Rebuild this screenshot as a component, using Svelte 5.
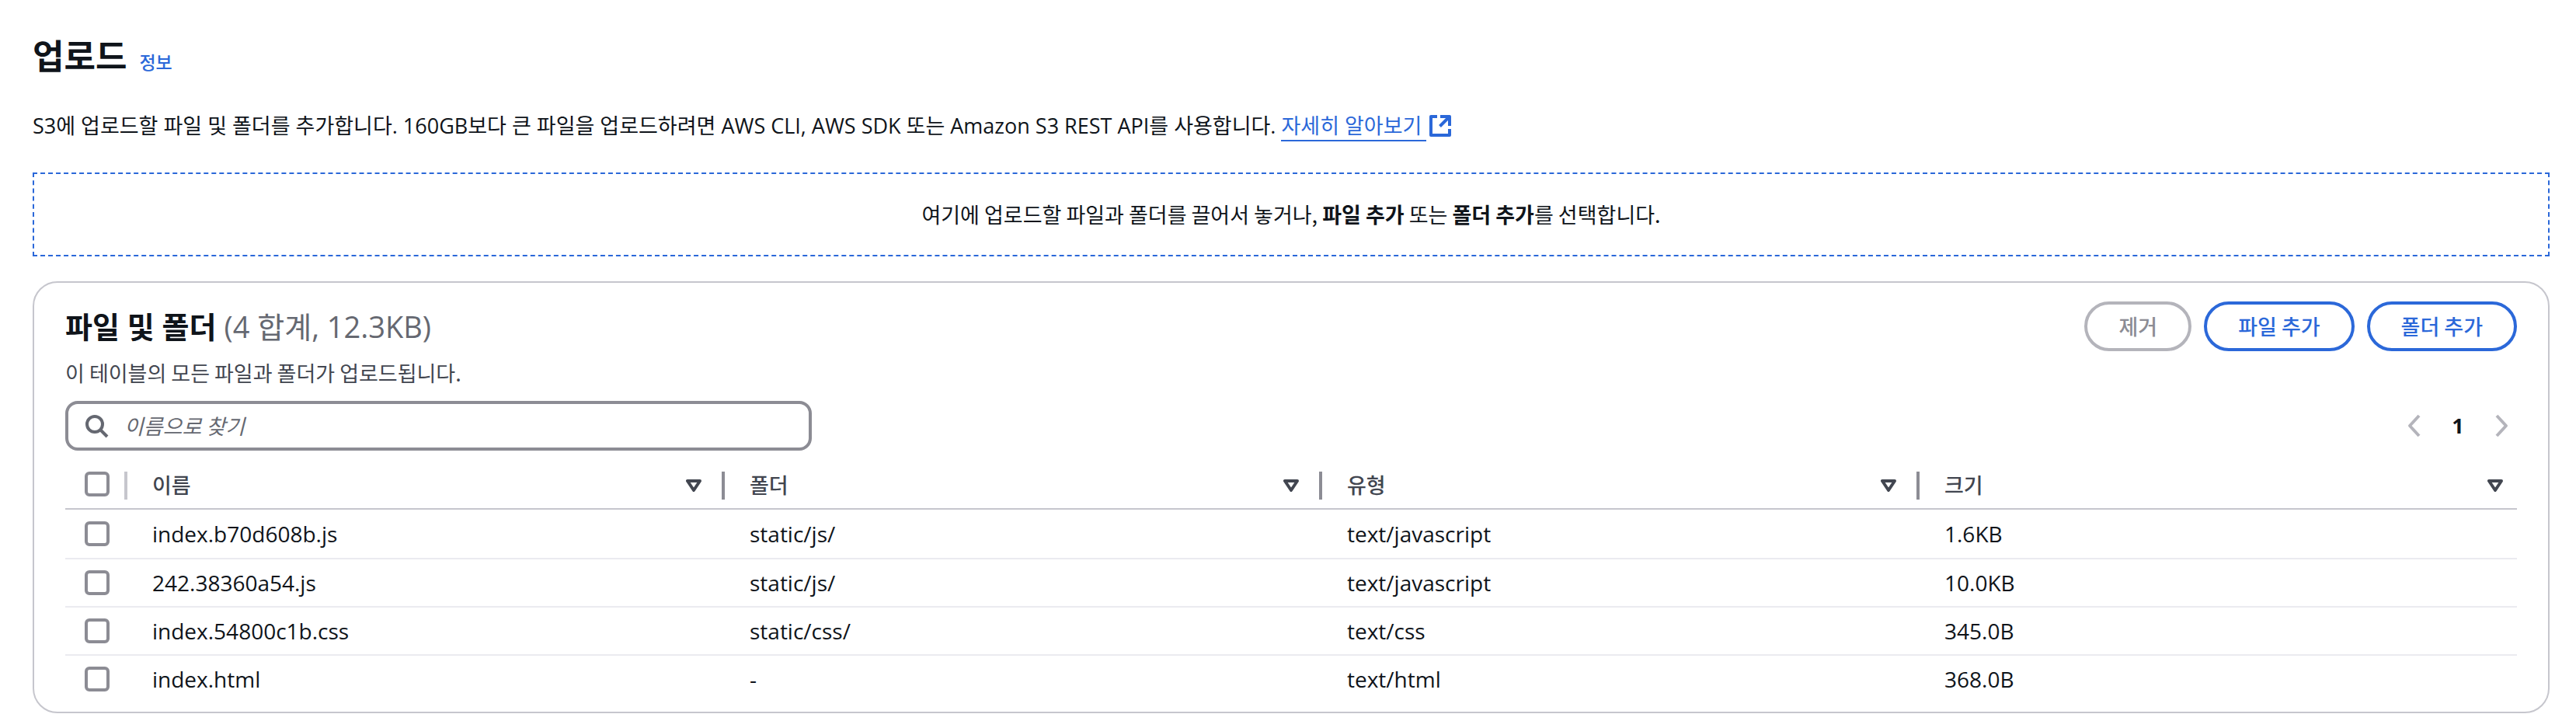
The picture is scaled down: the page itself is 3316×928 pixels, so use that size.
<script>
  const columns = [
    { key: 'name', label: '이름' },
    { key: 'folder', label: '폴더' },
    { key: 'type', label: '유형' },
    { key: 'size', label: '크기' }
  ];

  let files = $state([
    { name: 'index.b70d608b.js', folder: 'static/js/', type: 'text/javascript', size: '1.6KB', selected: false },
    { name: '242.38360a54.js', folder: 'static/js/', type: 'text/javascript', size: '10.0KB', selected: false },
    { name: 'index.54800c1b.css', folder: 'static/css/', type: 'text/css', size: '345.0B', selected: false },
    { name: 'index.html', folder: '-', type: 'text/html', size: '368.0B', selected: false }
  ]);

  let allSelected = $derived(files.every((file) => file.selected));

  function toggleAll(event) {
    for (const file of files) file.selected = event.currentTarget.checked;
  }
</script>

<main class="page">
  <header class="title-row">
    <h1>업로드</h1>
    <a class="info" href="#info">정보</a>
  </header>

  <p class="description">
    S3에 업로드할 파일 및 폴더를 추가합니다. 160GB보다 큰 파일을 업로드하려면 AWS CLI, AWS SDK 또는 Amazon S3 REST API를 사용합니다.
    <a class="learn-more" href="#learn-more"><span>자세히 알아보기</span><svg class="external" viewBox="0 0 28 28" aria-hidden="true"><path d="M10 2H2v24h24v-8M14 2h12v12M26 2 13.500 14.500" /></svg></a>
  </p>

  <section class="dropzone">
    <p>여기에 업로드할 파일과 폴더를 끌어서 놓거나, <b>파일 추가</b> 또는 <b>폴더 추가</b>를 선택합니다.</p>
  </section>

  <section class="card">
    <div class="card-header">
      <div class="card-title">
        <h2>파일 및 폴더 <span class="counter">(4 합계, 12.3KB)</span></h2>
        <p class="subtitle">이 테이블의 모든 파일과 폴더가 업로드됩니다.</p>
      </div>
      <div class="actions">
        <button class="button" disabled>제거</button>
        <button class="button">파일 추가</button>
        <button class="button">폴더 추가</button>
      </div>
    </div>

    <div class="tools">
      <label class="search">
        <svg class="search-icon" viewBox="0 0 32 32" aria-hidden="true"><circle cx="14" cy="14" r="10" /><path d="M21 21l9 9" /></svg>
        <input type="text" placeholder="이름으로 찾기" aria-label="이름으로 찾기" />
      </label>
      <nav class="pagination">
        <button class="page-arrow" disabled aria-label="이전 페이지"><svg viewBox="0 0 32 32" aria-hidden="true"><path d="M22 3 10 16l12 13" /></svg></button>
        <button class="page-number" aria-current="page">1</button>
        <button class="page-arrow" disabled aria-label="다음 페이지"><svg viewBox="0 0 32 32" aria-hidden="true"><path d="M10 3l12 13-12 13" /></svg></button>
      </nav>
    </div>

    <table>
      <thead>
        <tr>
          <th class="select" scope="col">
            <div class="select-head">
              <input type="checkbox" checked={allSelected} onchange={toggleAll} aria-label="모두 선택" />
            </div>
          </th>
          {#each columns as column (column.key)}
            <th scope="col">
              <button class="sort">
                <span>{column.label}</span>
                <svg viewBox="0 0 20 16" aria-hidden="true"><path d="M2 2h16l-8 12z" /></svg>
              </button>
            </th>
          {/each}
        </tr>
      </thead>
      <tbody>
        {#each files as file (file.name)}
          <tr>
            <td class="select"><input type="checkbox" bind:checked={file.selected} aria-label={file.name} /></td>
            <td>{file.name}</td>
            <td>{file.folder}</td>
            <td>{file.type}</td>
            <td>{file.size}</td>
          </tr>
        {/each}
      </tbody>
    </table>
  </section>
</main>

<style>
  :global(body) {
    background: #fff;
  }

  .page {
    --ink: #0f141a;
    --muted: #424650;
    --hint: #656871;
    --line: #c6c6cd;
    --control: #8c8c94;
    --blue: #2b68d9;
    padding: 40px 34px 10px 42px;
    color: var(--ink);
    font: 400 27px/40px "Open Sans", "Noto Sans CJK KR", sans-serif;
  }

  h1,
  h2,
  p {
    margin: 0;
  }

  button,
  input {
    font: inherit;
  }

  .title-row {
    display: flex;
    align-items: baseline;
    gap: 16px;
  }

  h1 {
    font-size: 44px;
    line-height: 64px;
    font-weight: 700;
  }

  .info {
    color: var(--blue);
    font-size: 23px;
    font-weight: 500;
    text-decoration: none;
  }

  .description {
    margin-top: 38px;
  }

  .learn-more {
    color: var(--blue);
    text-decoration: none;
  }

  .learn-more span {
    border-bottom: 2px solid currentColor;
    padding-right: 6px;
  }

  .external {
    width: 28px;
    height: 28px;
    margin-left: 4px;
    vertical-align: -4px;
    fill: none;
    stroke: currentColor;
    stroke-width: 4;
    stroke-linejoin: round;
  }

  .dropzone,
  .subtitle,
  .button,
  .search {
    font-family: "Noto Sans CJK KR", "Open Sans", sans-serif;
  }

  .dropzone {
    margin-top: 40px;
    padding: 32px;
    border: 2px dashed var(--blue);
    text-align: center;
  }

  .card {
    margin-top: 32px;
    padding: 24px 40px 10px;
    border: 2px solid var(--line);
    border-radius: 32px;
  }

  .card-header {
    display: flex;
    justify-content: space-between;
    align-items: flex-start;
  }

  h2 {
    font-size: 38px;
    line-height: 64px;
    font-weight: 700;
  }

  .counter {
    color: var(--hint);
    font-weight: 400;
  }

  .subtitle {
    color: var(--muted);
    line-height: 56px;
  }

  .actions {
    display: flex;
    gap: 16px;
  }

  .button {
    height: 64px;
    padding: 0 40px;
    border: 4px solid var(--blue);
    border-radius: 32px;
    background: none;
    color: var(--blue);
    font-weight: 500;
  }

  .button:disabled {
    border-color: #b4b4bb;
    color: var(--control);
  }

  .tools {
    display: flex;
    justify-content: space-between;
    align-items: center;
    margin-top: 8px;
  }

  .search {
    display: flex;
    align-items: center;
    gap: 20px;
    box-sizing: border-box;
    width: 961px;
    height: 64px;
    padding: 0 20px;
    border: 4px solid var(--control);
    border-radius: 16px;
  }

  .search-icon {
    width: 32px;
    height: 32px;
    flex: none;
    fill: none;
    stroke: var(--hint);
    stroke-width: 4;
  }

  .search input {
    flex: 1;
    min-width: 0;
    padding: 0;
    border: 0;
    outline: 0;
    background: none;
    color: var(--ink);
  }

  .search input::placeholder {
    color: var(--hint);
    font-style: italic;
    opacity: 1;
  }

  .pagination {
    display: flex;
    align-items: center;
  }

  .page-arrow,
  .page-number {
    display: flex;
    justify-content: center;
    padding: 0;
    border: 0;
    background: none;
    color: var(--ink);
  }

  .page-arrow {
    width: 40px;
  }

  .page-arrow svg {
    width: 32px;
    height: 32px;
    fill: none;
    stroke: #b4b4bb;
    stroke-width: 4;
    stroke-linejoin: round;
  }

  .page-number {
    width: 72px;
    font-weight: 700;
  }

  table {
    width: 100%;
    margin-top: 16px;
    border-spacing: 0;
    table-layout: fixed;
    font-size: 28px;
  }

  th,
  td {
    box-sizing: border-box;
    padding: 0 0 0 32px;
    text-align: left;
  }

  th {
    height: 60px;
    border-bottom: 2px solid var(--line);
  }

  td {
    height: 62px;
    border-bottom: 2px solid #ebebf0;
  }

  tbody tr:first-child td {
    height: 64px;
  }

  tbody tr:last-child td {
    border-bottom-color: transparent;
  }

  .select {
    width: 80px;
    padding-left: 25px;
  }

  .select-head {
    display: flex;
    align-items: flex-start;
    height: 36px;
    border-right: 4px solid var(--line);
  }

  .sort {
    display: flex;
    justify-content: space-between;
    align-items: center;
    box-sizing: border-box;
    width: 100%;
    height: 36px;
    padding: 0 26px 0 0;
    border: 0;
    border-right: 4px solid var(--control);
    background: none;
    color: var(--muted);
    font-size: 27px;
    font-weight: 500;
  }

  th:last-child .sort {
    padding-right: 18px;
    border-right: 0;
  }

  .sort svg {
    width: 20px;
    height: 16px;
    fill: none;
    stroke: currentColor;
    stroke-width: 4;
    stroke-linejoin: round;
  }

  input[type='checkbox'] {
    display: block;
    appearance: none;
    box-sizing: border-box;
    width: 32px;
    height: 32px;
    margin: 0;
    border: 4px solid var(--control);
    border-radius: 6px;
    background: #fff;
  }

  input[type='checkbox']:checked {
    border-color: var(--blue);
    background: var(--blue);
  }
</style>
